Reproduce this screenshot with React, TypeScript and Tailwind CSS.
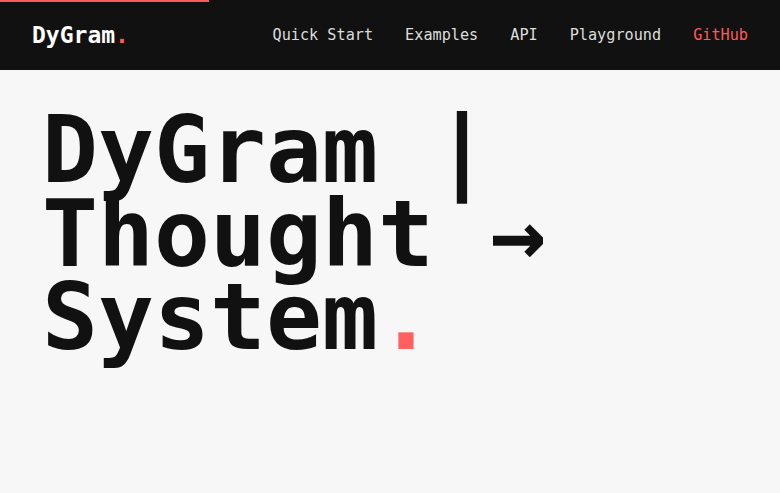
const links = ["Quick Start", "Examples", "API", "Playground"];

export default function App() {
  return (
    <div className="min-h-[493px] bg-[#f7f7f7] font-['DejaVu_Sans_Mono',monospace]">
      <div className="relative">
        <div className="absolute left-0 top-0 h-[2px] w-[209px] bg-[#ff5a5a]" />
        <nav className="flex h-[70px] items-center justify-between bg-[#111111] px-8">
          <div className="text-[23px] font-bold text-white">
            DyGram<span className="text-[#ff5a5a]">.</span>
          </div>
          <ul className="flex gap-8 text-[15.2px]">
            {links.map((l) => (
              <li key={l} className="text-[#dddddd]">
                {l}
              </li>
            ))}
            <li className="text-[#ff5a5a]">GitHub</li>
          </ul>
        </nav>
      </div>
      <main className="pl-[42px] pt-[39px]">
        <h1 className="text-[93px] font-bold leading-[0.9] text-[#111111]">
          <div>DyGram |</div>
          <div>Thought →</div>
          <div>
            System<span className="text-[#ff5f5f]">.</span>
          </div>
        </h1>
      </main>
    </div>
  );
}
